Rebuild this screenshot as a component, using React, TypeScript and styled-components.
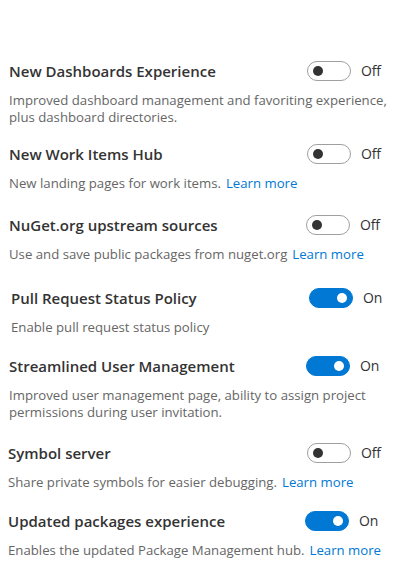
import React from "react";
import styled, { createGlobalStyle } from "styled-components";

const Global = createGlobalStyle`
  html, body { margin: 0; padding: 0; background: #ffffff; }
  body { font-family: "Open Sans", "Noto Sans", "Liberation Sans", sans-serif; }
`;

const Page = styled.div`
  width: 404px;
  height: 574px;
  box-sizing: border-box;
  padding-top: 61px;
  display: flex;
  flex-direction: column;
  overflow: hidden;
`;

const Section = styled.section<{ $indent: number; $gap: number }>`
  margin-top: ${(p) => p.$gap}px;
  padding-left: ${(p) => p.$indent}px;
  display: flex;
  flex-direction: column;
`;

const Header = styled.div<{ $shift: number }>`
  display: grid;
  grid-template-columns: ${(p) => 288 + p.$shift}px 44px auto;
  column-gap: 10px;
  align-items: center;
  height: 20px;
`;

const Title = styled.h3`
  margin: 0;
  font-size: 15px;
  font-weight: 600;
  color: #333333;
  white-space: nowrap;
`;

const Track = styled.span<{ $on: boolean }>`
  box-sizing: border-box;
  width: 44px;
  height: 20px;
  border-radius: 10px;
  display: flex;
  align-items: center;
  justify-content: ${(p) => (p.$on ? "flex-end" : "flex-start")};
  padding: 0 5px;
  background: ${(p) => (p.$on ? "#0078d4" : "#ffffff")};
  border: 1px solid ${(p) => (p.$on ? "#0078d4" : "#a19f9d")};
`;

const Thumb = styled.span<{ $on: boolean }>`
  width: 10px;
  height: 10px;
  border-radius: 50%;
  background: ${(p) => (p.$on ? "#ffffff" : "#333333")};
`;

const State = styled.span`
  font-size: 14px;
  color: #333333;
  line-height: 20px;
  margin-top: -1px;
  letter-spacing: -0.2px;
`;

const Description = styled.p`
  margin: 11px 0 0;
  font-size: 13.2px;
  line-height: 17px;
  color: #666666;
  white-space: nowrap;
`;

const Link = styled.a`
  color: #0078d4;
  text-decoration: none;
  margin-left: 5px;
`;

type Feature = {
  title: string;
  on: boolean;
  lines: string[];
  link?: boolean;
  indent: number;
  gap: number;
  shift: number;
};

const features: Feature[] = [
  {
    title: "New Dashboards Experience",
    on: false,
    lines: ["Improved dashboard management and favoriting experience,", "plus dashboard directories."],
    indent: 9,
    gap: 0,
    shift: 0,
  },
  {
    title: "New Work Items Hub",
    on: false,
    lines: ["New landing pages for work items."],
    link: true,
    indent: 9,
    gap: 18,
    shift: 0,
  },
  {
    title: "NuGet.org upstream sources",
    on: false,
    lines: ["Use and save public packages from nuget.org"],
    link: true,
    indent: 9,
    gap: 23,
    shift: -1,
  },
  {
    title: "Pull Request Status Policy",
    on: true,
    lines: ["Enable pull request status policy"],
    indent: 11,
    gap: 25,
    shift: 0,
  },
  {
    title: "Streamlined User Management",
    on: true,
    lines: ["Improved user management page, ability to assign project", "permissions during user invitation."],
    indent: 9,
    gap: 20,
    shift: -1,
  },
  {
    title: "Symbol server",
    on: false,
    lines: ["Share private symbols for easier debugging."],
    link: true,
    indent: 8,
    gap: 22,
    shift: 1,
  },
  {
    title: "Updated packages experience",
    on: true,
    lines: ["Enables the updated Package Management hub."],
    link: true,
    indent: 8,
    gap: 20,
    shift: -1,
  },
];

export default function App() {
  return (
    <>
      <Global />
      <Page>
        {features.map((f) => (
          <Section key={f.title} $indent={f.indent} $gap={f.gap}>
            <Header $shift={f.shift}>
              <Title>{f.title}</Title>
              <Track $on={f.on} role="switch" aria-checked={f.on}>
                <Thumb $on={f.on} />
              </Track>
              <State>{f.on ? "On" : "Off"}</State>
            </Header>
            <Description>
              {f.lines.map((l, i) => (
                <React.Fragment key={i}>
                  {i > 0 && <br />}
                  {l}
                </React.Fragment>
              ))}
              {f.link && <Link href="#">Learn more</Link>}
            </Description>
          </Section>
        ))}
      </Page>
    </>
  );
}
